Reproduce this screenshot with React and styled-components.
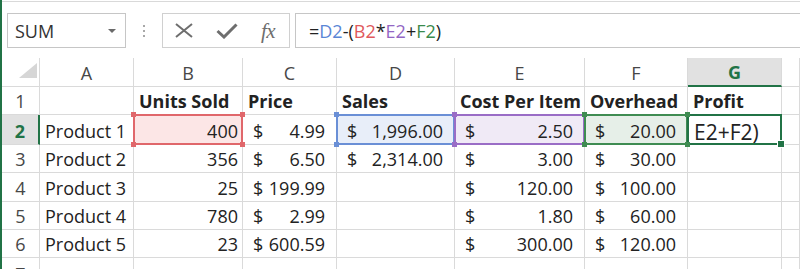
import React from 'react';
import styled, { createGlobalStyle } from 'styled-components';

const GlobalStyle = createGlobalStyle`
  html, body { margin: 0; padding: 0; background: #fff; }
  body { font-family: "Open Sans", "Noto Sans", sans-serif; overflow: hidden; }
  #root { width: 800px; height: 269px; }
`;

const GREEN = '#217346';
const GRID = '#dadada';

const RANGE = {
  red: { border: '#e0676b', fill: '#fce6e6' },
  blue: { border: '#6a8fd6', fill: '#e8eef9' },
  purple: { border: '#9a6dc6', fill: '#f0eaf6' },
  green: { border: '#3f8c52', fill: '#e6efe8' },
};

const Frame = styled.div`
  width: 800px;
  height: 269px;
  box-sizing: border-box;
  overflow: hidden;
  border-left: 2px solid ${GREEN};
  padding-top: 1px;
  background: #fff;
`;

const Toolbar = styled.div`
  display: flex;
  align-items: center;
  border-top: 1px solid #d9d9d9;
  padding: 11px 0 0 5px;
  height: 35px;
`;

const NameBox = styled.div`
  box-sizing: border-box;
  width: 119px;
  height: 35px;
  border: 1px solid #c6c6c6;
  display: flex;
  align-items: center;
  padding-left: 7px;
  padding-right: 9px;
`;

const NameText = styled.span`
  font-size: 18px;
  line-height: 24px;
  color: #333;
`;

const Caret = styled.span`
  margin-left: auto;
  width: 0;
  height: 0;
  border-left: 4px solid transparent;
  border-right: 4px solid transparent;
  border-top: 4px solid #6a6a6a;
`;

const Grip = styled.div`
  display: flex;
  flex-direction: column;
  gap: 3px;
  margin-left: 17px;
`;

const GripDot = styled.span`
  width: 2px;
  height: 2px;
  background: #a8a8a8;
`;

const Buttons = styled.div`
  box-sizing: border-box;
  width: 128px;
  height: 35px;
  margin-left: 17px;
  border: 1px solid #d0d0d0;
  display: flex;
  align-items: center;
  padding-left: 10px;
`;

const IconSlot = styled.span`
  display: flex;
  align-items: center;
  justify-content: center;
  width: ${p => p.$w}px;
  margin-right: ${p => p.$gap || 0}px;
`;

const Fx = styled.span`
  font-family: "Liberation Serif", "DejaVu Serif", serif;
  font-style: italic;
  font-size: 21px;
  line-height: 24px;
  color: #6e6e6e;
  letter-spacing: -0.5px;
`;

const FormulaBox = styled.div`
  flex: 1;
  box-sizing: border-box;
  height: 35px;
  margin-left: 5px;
  margin-right: -10px;
  border: 1px solid #c6c6c6;
  display: flex;
  align-items: center;
  padding-left: 13px;
  font-size: 18px;
  line-height: 24px;
  color: #222;
  white-space: nowrap;
`;

const Ref = styled.span`
  color: ${p => p.$c};
`;

const Sheet = styled.div`
  margin-top: 10px;
`;

const Row = styled.div`
  display: grid;
  grid-template-columns: 38px 94px 109px 94px 118px 130px 103px 94px 1fr;
  height: ${p => p.$h}px;
`;

const HeadBase = styled.div`
  box-sizing: border-box;
  display: flex;
  align-items: flex-end;
  justify-content: center;
  padding-bottom: 1px;
  font-size: 18px;
  line-height: 24px;
  color: #474747;
  background: ${p => (p.$active ? '#e1e1e1' : '#fff')};
  font-weight: ${p => (p.$active ? 700 : 400)};
  ${p => p.$active && `color: ${GREEN};`}
`;

const ColHead = styled(HeadBase)`
  border-right: 1px solid ${GRID};
  border-bottom: ${p => (p.$active ? `2px solid ${GREEN}` : `1px solid ${GRID}`)};
`;

const RowHead = styled(HeadBase)`
  border-right: ${p => (p.$active ? `2px solid ${GREEN}` : `1px solid ${GRID}`)};
  border-bottom: 1px solid ${GRID};
`;

const Corner = styled.div`
  box-sizing: border-box;
  border-right: 1px solid ${GRID};
  border-bottom: 1px solid ${GRID};
  display: flex;
  align-items: flex-end;
  justify-content: flex-end;
  padding: 0 2px 8px 0;
`;

const Triangle = styled.span`
  width: 0;
  height: 0;
  border-left: 18px solid transparent;
  border-bottom: 15px solid #d6d6d6;
`;

const Cell = styled.div`
  position: relative;
  box-sizing: border-box;
  border-right: 1px solid ${GRID};
  border-bottom: 1px solid ${GRID};
  display: flex;
  align-items: flex-end;
  justify-content: ${p => (p.$align === 'right' ? 'flex-end' : 'flex-start')};
  padding: 0 4px 1px 5px;
  font-size: 18px;
  line-height: 24px;
  color: #222;
  font-weight: ${p => (p.$bold ? 700 : 400)};
  background: ${p => (p.$range ? RANGE[p.$range].fill : 'transparent')};
  white-space: nowrap;
`;

const MoneyCell = styled(Cell)`
  justify-content: space-between;
  padding: 0 11px 1px 10px;
`;

const EditCell = styled(Cell)`
  font-size: 21px;
  padding-left: 6px;
  padding-bottom: 0;
`;

const RangeBox = styled.span`
  position: absolute;
  top: -1px;
  left: -1px;
  right: -1px;
  bottom: -1px;
  border: 2px solid ${p => p.$c};
  pointer-events: none;
`;

const Handle = styled.span`
  position: absolute;
  z-index: 3;
  width: 5px;
  height: 5px;
  background: ${p => p.$c};
  ${p => (p.$v === 't' ? 'top: -4px;' : 'bottom: -4px;')}
  ${p => (p.$h === 'l' ? 'left: -4px;' : 'right: -4px;')}
`;

const ActiveBox = styled.span`
  position: absolute;
  z-index: 2;
  top: -1px;
  left: -1px;
  right: -1px;
  bottom: -1px;
  border: 2px solid ${GREEN};
  pointer-events: none;
`;

const FillHandle = styled.span`
  position: absolute;
  right: -5px;
  bottom: -5px;
  width: 6px;
  height: 6px;
  background: ${GREEN};
  border: 1px solid #fff;
`;

const Range = ({ color }) => {
  const c = RANGE[color].border;
  return (
    <RangeBox $c={c}>
      <Handle $c={c} $v="t" $h="l" />
      <Handle $c={c} $v="t" $h="r" />
      <Handle $c={c} $v="b" $h="l" />
      <Handle $c={c} $v="b" $h="r" />
    </RangeBox>
  );
};

const LETTERS = ['A', 'B', 'C', 'D', 'E', 'F', 'G'];

const DATA = [
  ['Product 1', '400', '4.99', '1,996.00', '2.50', '20.00'],
  ['Product 2', '356', '6.50', '2,314.00', '3.00', '30.00'],
  ['Product 3', '25', '199.99', null, '120.00', '100.00'],
  ['Product 4', '780', '2.99', null, '1.80', '60.00'],
  ['Product 5', '23', '600.59', null, '300.00', '120.00'],
];

const HEIGHTS = [30, 28, 29, 28, 28];

const Money = ({ value, range }) => (
  <MoneyCell $range={range}>
    {value !== null && <span>$</span>}
    {value !== null && <span>{value}</span>}
    {range && <Range color={range} />}
  </MoneyCell>
);

const XIcon = () => (
  <svg width="20" height="15" viewBox="0 0 20 15">
    <path d="M2 1 L18 14 M18 1 L2 14" stroke="#6e6e6e" strokeWidth="2" fill="none" />
  </svg>
);

const CheckIcon = () => (
  <svg width="22" height="16" viewBox="0 0 22 16">
    <path d="M1.5 8 L8 14 L20.5 1.5" stroke="#6e6e6e" strokeWidth="3" fill="none" />
  </svg>
);

export default function App() {
  return (
    <>
      <GlobalStyle />
      <Frame>
        <Toolbar>
          <NameBox>
            <NameText>SUM</NameText>
            <Caret />
          </NameBox>
          <Grip>
            <GripDot />
            <GripDot />
            <GripDot />
          </Grip>
          <Buttons>
            <IconSlot $w={22} $gap={21}><XIcon /></IconSlot>
            <IconSlot $w={22} $gap={20}><CheckIcon /></IconSlot>
            <IconSlot $w={20}><Fx>fx</Fx></IconSlot>
          </Buttons>
          <FormulaBox>
            =<Ref $c="#5a86d6">D2</Ref>-(<Ref $c="#e0585c">B2</Ref>*<Ref $c="#9366c4">E2</Ref>+<Ref $c="#3a8a4c">F2</Ref>)
          </FormulaBox>
        </Toolbar>
        <Sheet>
          <Row $h={29}>
            <Corner><Triangle /></Corner>
            {LETTERS.map(l => (
              <ColHead key={l} $active={l === 'G'}>{l}</ColHead>
            ))}
            <ColHead />
          </Row>
          <Row $h={28}>
            <RowHead>1</RowHead>
            <Cell />
            <Cell $bold>Units Sold</Cell>
            <Cell $bold>Price</Cell>
            <Cell $bold>Sales</Cell>
            <Cell $bold>Cost Per Item</Cell>
            <Cell $bold>Overhead</Cell>
            <Cell $bold>Profit</Cell>
            <Cell />
          </Row>
          {DATA.map((r, i) => {
            const first = i === 0;
            return (
              <Row key={i} $h={HEIGHTS[i]}>
                <RowHead $active={first}>{i + 2}</RowHead>
                <Cell>{r[0]}</Cell>
                <Cell $align="right" $range={first ? 'red' : undefined}>
                  {r[1]}
                  {first && <Range color="red" />}
                </Cell>
                <Money value={r[2]} />
                <Money value={r[3]} range={first ? 'blue' : undefined} />
                <Money value={r[4]} range={first ? 'purple' : undefined} />
                <Money value={r[5]} range={first ? 'green' : undefined} />
                {first ? (
                  <EditCell>
                    E2+F2)
                    <ActiveBox>
                      <FillHandle />
                    </ActiveBox>
                  </EditCell>
                ) : (
                  <Cell />
                )}
                <Cell />
              </Row>
            );
          })}
          <Row $h={30}>
            <RowHead>7</RowHead>
            <Cell />
            <Cell />
            <Cell />
            <Cell />
            <Cell />
            <Cell />
            <Cell />
            <Cell />
          </Row>
        </Sheet>
      </Frame>
    </>
  );
}
